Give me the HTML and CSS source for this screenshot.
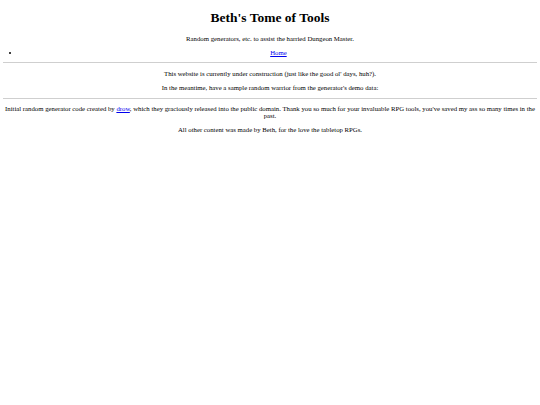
FILE: index.html
```html
<!DOCTYPE html>
<html lang="en">
<head>
<meta charset="utf-8">
<title>Beth's Tome of Tools</title>
<link rel="stylesheet" href="styles.css">
</head>
<body class="page">
<header class="site-header">
  <h1 class="site-title">Beth's Tome of Tools</h1>
  <p class="text">Random generators, etc. to assist the harried Dungeon Master.</p>
  <nav class="site-nav">
    <ul class="nav-list">
      <li class="nav-item"><a class="link" href="#">Home</a></li>
    </ul>
  </nav>
</header>
<main class="content">
  <p class="text">This website is currently under construction (just like the good ol' days, huh?).</p>
  <p class="text">In the meantime, have a sample random warrior from the generator's demo data:</p>
  <div class="warrior"></div>
</main>
<footer class="site-footer">
  <p class="text">Initial random generator code created by <a class="link" href="#">drow</a>, which they graciously released into the public domain. Thank you so much for your invaluable RPG tools, you've saved my ass so many times in the past.</p>
  <p class="text">All other content was made by Beth, for the love the tabletop RPGs.</p>
</footer>
</body>
</html>
```

FILE: styles.css
```css
html {
  background: #ffffff;
}

.page {
  margin: 0 3.375px 3.375px;
  font-family: "Liberation Serif", "Times New Roman", serif;
  font-size: 6.75px;
  line-height: normal;
  color: #000000;
  text-align: center;
}

.site-title {
  font-size: 13.5px;
  font-weight: bold;
  margin: 9.9px 0 9.05px;
}

.text {
  margin: 6.75px 0;
}

.nav-list {
  margin: 6.75px 0;
  padding-left: 16.875px;
  list-style: disc;
}

.link {
  color: #0000ee;
  text-decoration: underline;
}

.content {
  border-top: 1px solid #cfcfcf;
  border-bottom: 1px solid #cfcfcf;
}
```
